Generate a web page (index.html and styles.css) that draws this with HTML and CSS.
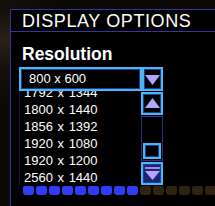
FILE: index.html
```html
<!DOCTYPE html>
<html lang="en">
<head>
    <meta charset="UTF-8">
    <title>Display Options</title>
    <link rel="stylesheet" href="styles.css">
</head>
<body>
    <div class="panel">
        <div class="header">DISPLAY OPTIONS</div>
        <div class="content">
            <h3>Resolution</h3>
            <div class="select">
                <div class="select-box">800 x 600</div>
                <div class="btn select-btn">
                    <svg width="15" height="10" viewBox="0 0 15 10"><polygon points="0,0 15,0 7.5,10" fill="#b4a4ff"/></svg>
                </div>
            </div>
            <div class="dropdown">
                <div class="list">
                    <div class="rows">
                        <div class="row">1792 x 1344</div>
                        <div class="row">1800 x 1440</div>
                        <div class="row">1856 x 1392</div>
                        <div class="row">1920 x 1080</div>
                        <div class="row">1920 x 1200</div>
                        <div class="row">2560 x 1440</div>
                    </div>
                </div>
                <div class="scrollbar">
                    <div class="btn up">
                        <svg width="15" height="10" viewBox="0 0 15 10"><polygon points="7.5,0 15,10 0,10" fill="#b4a4ff"/></svg>
                    </div>
                    <div class="track">
                        <div class="thumb"></div>
                    </div>
                    <div class="btn down">
                        <span class="bar"></span>
                        <svg width="15" height="9" viewBox="0 0 15 9"><polygon points="0,0 15,0 7.5,9" fill="#b4a4ff"/></svg>
                    </div>
                </div>
            </div>
            <div class="progress">
                <span class="on"></span><span class="on"></span><span class="on"></span>
                <span class="on"></span><span class="on"></span><span class="on"></span>
                <span class="on"></span><span class="on"></span><span class="on"></span>
                <span></span><span></span><span></span><span></span><span></span><span></span>
            </div>
        </div>
    </div>
</body>
</html>
```

FILE: styles.css
```css
body {
    margin: 0;
    height: 206px;
    overflow: hidden;
    font-family: 'Liberation Sans', Arial, sans-serif;
    color: #fff;
    background: radial-gradient(circle at 5px 40px, #2a2018 0, #15100b 30px, #0c0907 60px);
    background-color: #100c08;
}

.panel {
    margin: 9px 0 0 10px;
    height: 197px;
    background: #000;
    border-top: 1px solid #3434a4;
    border-left: 1px solid #3434a4;
}

.header {
    height: 21px;
    line-height: 22px;
    padding-left: 11px;
    font-size: 18px;
    letter-spacing: 0.6px;
    border-bottom: 1px solid #3434a4;
}

.content {
    padding-left: 8px;
}

h3 {
    margin: 12px 0 0 3px;
    font-size: 17.5px;
    line-height: 20px;
    font-weight: bold;
}

.select {
    display: flex;
    margin-top: 3px;
    height: 24px;
}

.select-box {
    border: 2px solid #4cb6ee;
    box-shadow: inset 0 0 0 1px #1e3c9c;
    padding-left: 8px;
    box-sizing: border-box;
    width: 123px;
    font-size: 13px;
    line-height: 20px;
}

.btn {
    width: 21px;
    box-sizing: border-box;
    border: 2px solid #4cb6ee;
    box-shadow: inset 0 0 0 1px #1e3c9c;
    background: #000;
    display: flex;
    align-items: center;
    justify-content: center;
}

.select-btn svg {
    margin-top: 1px;
}

.dropdown {
    display: flex;
    height: 94px;
}

.list {
    width: 121px;
    overflow: hidden;
    position: relative;
    border-left: 1px solid #14143c;
}

.list::before {
    content: '';
    position: absolute;
    left: -1px;
    top: 29px;
    width: 1px;
    height: 13px;
    background: #3aa6e8;
}

.rows {
    margin-top: -7px;
    padding-left: 4px;
}

.row {
    height: 17px;
    line-height: 17px;
    font-size: 13px;
    word-spacing: 1px;
}

.scrollbar {
    display: flex;
    flex-direction: column;
    width: 23px;
    margin-top: 1px;
}

.scrollbar .btn {
    width: 22px;
    height: 23px;
}

.up svg {
    margin-top: -1px;
}

.track {
    flex: 1;
    margin: 1px 0;
    border: 1px solid #2c2c8c;
    width: 22px;
    box-sizing: border-box;
    display: flex;
    flex-direction: column;
    justify-content: flex-end;
    align-items: center;
}

.thumb {
    width: 18px;
    height: 16px;
    box-sizing: border-box;
    border: 2px solid #4cb6ee;
    box-shadow: inset 0 0 0 1px #1e3c9c;
    margin-bottom: 1px;
}

.scrollbar .down {
    flex-direction: column;
    justify-content: flex-start;
    background: #1a2470;
    padding-top: 3px;
}

.down .bar {
    width: 15px;
    height: 2px;
    background: #9a8ae8;
    margin-bottom: 2px;
}

.progress {
    display: flex;
    gap: 2px;
    margin: 1px 0 0 4px;
}

.progress span {
    width: 11px;
    height: 9px;
    flex: none;
    border-radius: 2px 2px 3px 3px;
    background: #2e2310;
}

.progress span.on {
    background: #2f3cf6;
}
```
